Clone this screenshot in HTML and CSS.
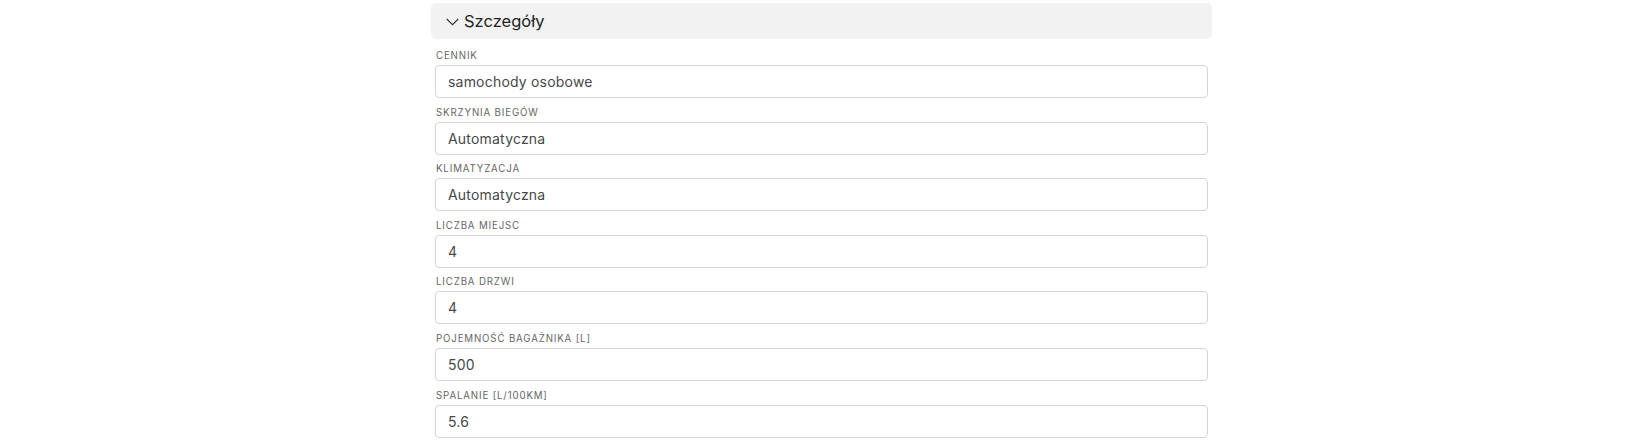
FILE: index.html
```html
<!DOCTYPE html>
<html lang="pl">
<head>
    <meta charset="UTF-8">
    <meta name="viewport" content="width=device-width, initial-scale=1.0">
    <title>Szczegóły</title>
    <link rel="stylesheet" href="styles.css">
</head>
<body>
    <div class="panel">
        <div class="panel-header">
            <svg class="chevron" width="13" height="8" viewBox="0 0 13 8">
                <polyline points="0.8,1 6.5,6.7 12.2,1" fill="none" stroke="#333" stroke-width="1.1"/>
            </svg>
            <span>Szczegóły</span>
        </div>

        <div class="fields">
            <div class="field">
                <label for="f-cennik">Cennik</label>
                <input id="f-cennik" type="text" value="samochody osobowe" readonly>
            </div>
            <div class="field">
                <label for="f-skrzynia">Skrzynia biegów</label>
                <input id="f-skrzynia" type="text" value="Automatyczna" readonly>
            </div>
            <div class="field">
                <label for="f-klima">Klimatyzacja</label>
                <input id="f-klima" type="text" value="Automatyczna" readonly>
            </div>
            <div class="field">
                <label for="f-miejsca">Liczba miejsc</label>
                <input id="f-miejsca" type="text" value="4" readonly>
            </div>
            <div class="field">
                <label for="f-drzwi">Liczba drzwi</label>
                <input id="f-drzwi" type="text" value="4" readonly>
            </div>
            <div class="field">
                <label for="f-bagaznik">Pojemność bagażnika [L]</label>
                <input id="f-bagaznik" type="text" value="500" readonly>
            </div>
            <div class="field">
                <label for="f-spalanie">Spalanie [L/100km]</label>
                <input id="f-spalanie" type="text" value="5.6" readonly>
            </div>
        </div>
    </div>
</body>
</html>
```

FILE: styles.css
```css
body {
    font-family: Inter, "Noto Sans", Arial, sans-serif;
    background-color: #fff;
    color: #333;
    margin: 0;
    padding: 0;
}
.panel {
    width: 781px;
    margin: 3px 0 0 431px;
}
.panel-header {
    display: flex;
    align-items: center;
    gap: 5px;
    height: 36px;
    padding-left: 15px;
    background-color: #f2f2f2;
    border-radius: 5px;
    font-size: 16.5px;
    color: #222;
}
.chevron {
    margin-top: 1px;
}
.fields {
    display: flex;
    flex-direction: column;
    gap: 8.6px;
    padding: 11px 4px 0 4px;
}
.field label {
    display: block;
    font-size: 9.7px;
    line-height: 12px;
    letter-spacing: 0.85px;
    text-transform: uppercase;
    color: #666;
    margin: 0 0 3px 1px;
}
.field input {
    display: block;
    width: 100%;
    height: 33px;
    box-sizing: border-box;
    padding: 0 12px;
    border: 1px solid #d4d4d4;
    border-radius: 4px;
    font-family: inherit;
    font-size: 14px;
    letter-spacing: 0.2px;
    color: #484848;
    background: #fff;
    outline: none;
}
```
